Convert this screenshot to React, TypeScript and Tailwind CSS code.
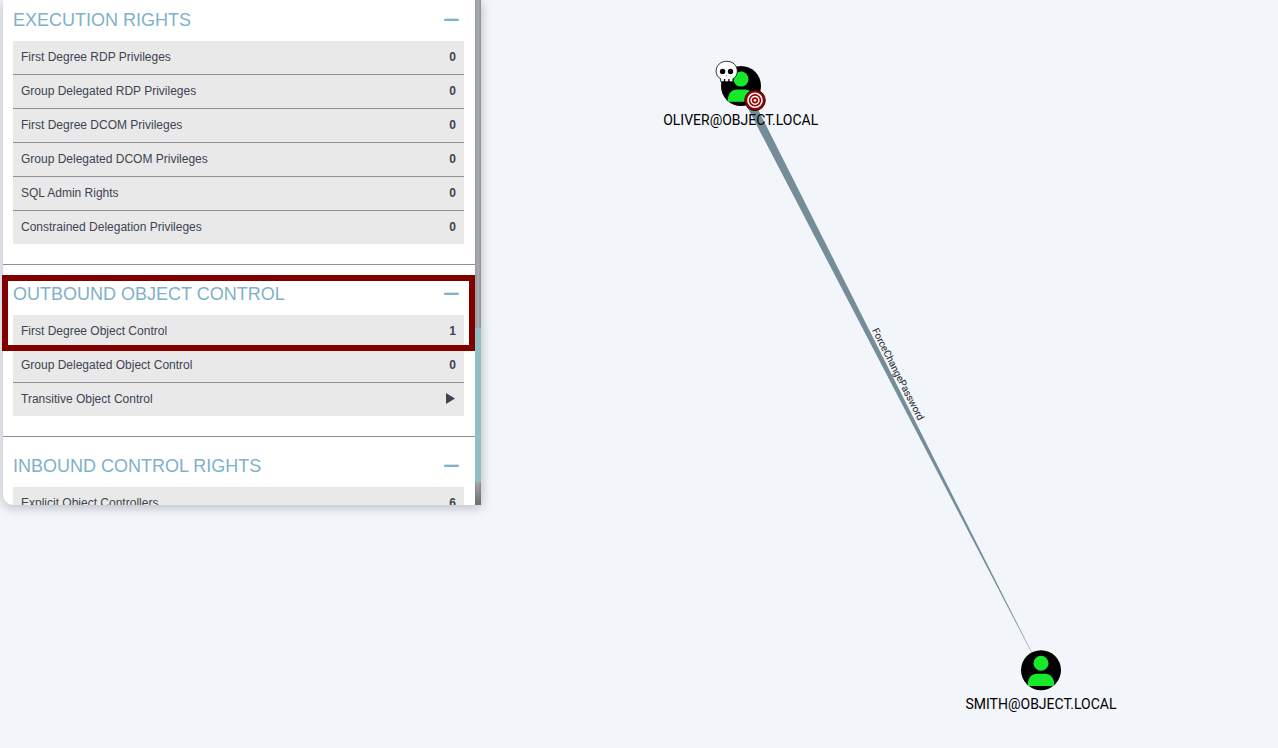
import React from "react";

type Row = { label: string; value?: string };

function Section({ title, rows, last = false }: { title: string; rows: Row[]; last?: boolean }) {
  return (
    <section className={last ? "" : "border-b border-[#8d9094] pb-5"}>
      <div className="flex h-[50px] items-start justify-between pl-[10px] pr-[16px]">
        <h2 className="mt-[15px] text-[18px] leading-[28px] text-[#7fb1c8]">{title}</h2>
        <span className="mt-[28px] h-[2px] w-[15px] rounded-[1px] bg-[#7fb1c8] shadow-[0_-1px_0_#d3e5ec]" />
      </div>
      <ul className="ml-[10px] mr-[11px] divide-y divide-[#8d9094] bg-[#e9e9e9] text-[12px] text-[#3d4452]">
        {rows.map((row) => (
          <li key={row.label} className="flex h-[34px] items-center justify-between px-2 pb-[2px] last:h-[33px] last:pb-px">
            <span>{row.label}</span>
            {row.value !== undefined ? (
              <b>{row.value}</b>
            ) : (
              <svg width="9" height="12" viewBox="0 0 9 12" className="mr-px">
                <path d="M0 0 9 5.5 0 11Z" fill="#3d4452" />
              </svg>
            )}
          </li>
        ))}
      </ul>
    </section>
  );
}

function User({ x, y }: { x: number; y: number }) {
  return (
    <g transform={`translate(${x} ${y})`}>
      <circle r="20" fill="#000" />
      <circle cy="-6.9" r="7.5" fill="#18e82a" />
      <path d="M-13.2 15.7v-1.4C-13.2 7.5-9 3.6-4 3.6h8c5 0 9.2 3.9 9.2 10.7v1.4Z" fill="#18e82a" />
    </g>
  );
}

function Graph() {
  return (
    <svg width="1278" height="748" className="absolute inset-0 font-['Roboto',sans-serif]">
      <path d="M746 104.6 753.6 100.7 1032 652.8 1031.7 653Z" fill="#748d98" />
      <User x={741} y={86} />
      <User x={1041} y={670.2} />
      <g transform="translate(726.7 71.9)">
        <path
          d="M0-10.6C-6.2-10.6-10.6-6.4-10.6-.7c0 3.4 1.8 6.3 4.6 7.5v3H6.2V6.8C9 5.6 10.6 2.7 10.6-.7 10.6-6.4 6.2-10.6 0-10.6Z"
          fill="#fff" stroke="#000" strokeWidth=".8"
        />
        <circle cx="-4.1" cy="-.5" r="2.7" />
        <circle cx="3.8" cy="-.5" r="2.7" />
        <path d="M-2.2 10V7M2.2 10V7" stroke="#000" strokeWidth="1.3" />
        <path d="M-.2 3.4v1.1" stroke="#888" strokeWidth="1" />
      </g>
      <g transform="translate(755 100.3)" fill="none">
        <circle r="10.3" fill="#990000" stroke="#210000" strokeWidth=".9" />
        <circle r="7" stroke="#fff" strokeWidth="1.6" />
        <circle r="3.9" stroke="#fff" strokeWidth="1.5" />
        <circle r="1.4" fill="#fff" />
      </g>
      <g fontSize="14" fill="#000" textAnchor="middle">
        <text x="740.7" y="125" textLength="155">OLIVER@OBJECT.LOCAL</text>
        <text x="1041" y="709" textLength="151">SMITH@OBJECT.LOCAL</text>
        <text transform="translate(895 375.7) rotate(62.8)" fontSize="10" fill="#1c1c1c" textLength="102">ForceChangePassword</text>
      </g>
    </svg>
  );
}

export default function App() {
  return (
    <main className="relative h-[748px] w-[1278px] overflow-hidden bg-[#f2f5fa] font-['Liberation_Sans',sans-serif]">
      <Graph />
      <aside className="relative ml-[3px] flex h-[505px] w-[478px] overflow-hidden rounded-bl-[10px] bg-white shadow-[0_2px_12px_rgba(0,0,0,0.26)]">
        <div className="-mt-[9px] w-[472px] shrink-0">
          <Section
            title="EXECUTION RIGHTS"
            rows={[
              { label: "First Degree RDP Privileges", value: "0" },
              { label: "Group Delegated RDP Privileges", value: "0" },
              { label: "First Degree DCOM Privileges", value: "0" },
              { label: "Group Delegated DCOM Privileges", value: "0" },
              { label: "SQL Admin Rights", value: "0" },
              { label: "Constrained Delegation Privileges", value: "0" },
            ]}
          />
          <Section
            title="OUTBOUND OBJECT CONTROL"
            rows={[
              { label: "First Degree Object Control", value: "1" },
              { label: "Group Delegated Object Control", value: "0" },
              { label: "Transitive Object Control" },
            ]}
          />
          <Section title="INBOUND CONTROL RIGHTS" last rows={[{ label: "Explicit Object Controllers", value: "6" }]} />
        </div>
        <div className="flex w-[6px] flex-col bg-linear-to-r from-[#95989d] via-[#a9adb2] to-[#8f9297]">
          <div className="mt-[328px] h-[154px] bg-[#90c0c5]" />
          <div className="flex-1 bg-linear-to-b from-transparent to-[#6c6d72]" />
        </div>
      </aside>
      <div className="absolute left-[2px] top-[275px] h-[76px] w-[473px] border-[6px] border-[#800000]" />
    </main>
  );
}
